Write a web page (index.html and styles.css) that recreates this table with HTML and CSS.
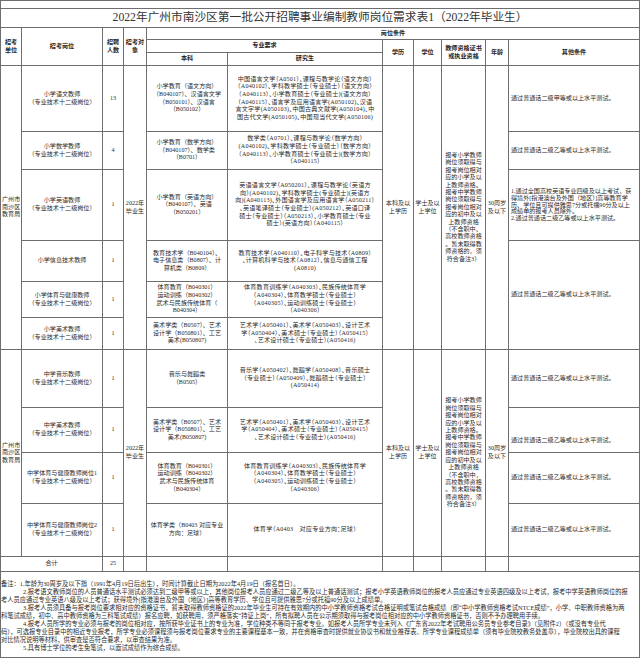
FILE: index.html
```html
<!DOCTYPE html>
<html lang="zh-CN">
<head>
<meta charset="utf-8">
<title>2022年广州市南沙区第一批公开招聘事业编制教师岗位需求表1</title>
<link rel="stylesheet" href="styles.css">
</head>
<body>
<table class="sheet">
<colgroup>
<col class="c-unit"><col class="c-post"><col class="c-num"><col class="c-obj"><col class="c-ug"><col class="c-pg"><col class="c-edu"><col class="c-deg"><col class="c-qual"><col class="c-age"><col class="c-other">
</colgroup>
<tr class="g0"><td colspan="11"></td></tr>
<tr class="g1"><td colspan="11" class="title">2022年广州市南沙区第一批公开招聘事业编制教师岗位需求表1（2022年毕业生）</td></tr>
<tr class="ha">
<th rowspan="3">招考<br>单位</th>
<th rowspan="3">招考岗位</th>
<th rowspan="3">招聘<br>人数</th>
<th rowspan="3">招考对<br>象</th>
<th colspan="7">岗位条件</th>
</tr>
<tr class="hb">
<th colspan="2">专业要求</th>
<th rowspan="2">学历</th>
<th rowspan="2">学位</th>
<th rowspan="2">教师资格证书<br>或执业资格</th>
<th rowspan="2">年龄</th>
<th rowspan="2">其他条件</th>
</tr>
<tr class="hc"><th>本科</th><th>研究生</th></tr>

<tr class="r1">
<td rowspan="6" class="unit-a">广州市<br>南沙区<br>教育局</td>
<td>小学语文教师<br>（专业技术十二级岗位）</td>
<td>13</td>
<td rowspan="6">2022年<br>毕业生</td>
<td>小学教育（语文方向）<br>（B040107）、汉语言文学<br>（B050101）、汉语言<br>（B050102）</td>
<td class="pg">中国语言文学（A0501）、课程与教学论（语文方向）<br>（A040102）、学科教学硕士（专业硕士）（语文方向）<br>（A040113）、小学教育硕士（专业硕士)(语文方向）<br>（A040115）、语言学及应用语言学(A050102)、汉语<br>言文字学(A050103)、中国古典文献学(A050104)、中<br>国古代文学(A050105)、中国现当代文学(A050106)</td>
<td rowspan="6">本科及以<br>上学历</td>
<td rowspan="6">学士及以<br>上学位</td>
<td rowspan="6" class="qual">报考小学教师<br>岗位须取得与<br>报考岗位相对<br>应的小学及以<br>上教师资格。<br>报考中学教师<br>岗位须取得与<br>报考岗位相对<br>应的初中及以<br>上教师资格<br>（不含职中、<br>高校教师资格<br>。暂未取得教<br>师资格的，须<br>符合备注3）</td>
<td rowspan="6">30周岁<br>及以下</td>
<td class="other">通过普通话二级甲等或以上水平测试。</td>
</tr>
<tr class="r2">
<td>小学数学教师<br>（专业技术十二级岗位）</td>
<td>4</td>
<td>小学教育（数学方向）<br>（B040107）、数学类<br>（B0701）</td>
<td class="pg">数学类（A0701）、课程与教学论（数学方向）<br>(A040102)、学科教学硕士（专业硕士）（数学方向）<br>（A040113）、小学教育硕士（专业硕士)(数学方向）<br>（A040115）</td>
<td class="other">通过普通话二级乙等或以上水平测试。</td>
</tr>
<tr class="r3">
<td>小学英语教师<br>（专业技术十二级岗位）</td>
<td>1</td>
<td>小学教育（英语方向）<br>（B040107）、英语<br>（B050201）</td>
<td class="pg">英语语言文学（A050201）、课程与教学论（英语方<br>向）(A040102)、学科教学硕士(专业硕士)(英语方<br>向)(A040113)、外国语言学及应用语言学（A050211）<br>、英语笔译硕士（专业硕士）(A050212）、英语口译<br>硕士（专业硕士）（A050213）、小学教育硕士（专业<br>硕士）(英语方向）（A040115）</td>
<td class="other tight">1.通过全国高校英语专业四级及以上考试，获<br>得境外[指港澳台及外国（地区）]高等教育学<br>历、学位且可提供雅思7分或托福90分及以上<br>成绩单的报考人员除外。<br>2.通过普通话二级乙等或以上水平测试。</td>
</tr>
<tr class="r4">
<td>小学信息技术教师</td>
<td>1</td>
<td>教育技术学（B040104）、<br>电子信息类（B0807）、计<br>算机类（B0809）</td>
<td class="pg">教育技术学（A040110）、电子科学与技术（A0809）<br>、计算机科学与技术（A0812）、信息与通信工程<br>(A0810)</td>
<td rowspan="3" class="other">通过普通话二级乙等或以上水平测试。</td>
</tr>
<tr class="r5">
<td>小学体育与健康教师<br>（专业技术十二级岗位）</td>
<td>1</td>
<td>体育教育（B040301）<br>运动训练（B040302）<br>武术与民族传统体育（<br>B040304）</td>
<td class="pg">体育教育训练学（A040303）、民族传统体育学<br>（A040304）、体育教学硕士（专业硕士）<br>（A040305）、运动训练硕士（专业硕士）<br>（A040306）</td>
</tr>
<tr class="r6">
<td>小学美术教师<br>（专业技术十二级岗位）</td>
<td>1</td>
<td>美术学类（B0507）、艺术<br>设计学（B050801）、工艺<br>美术(B050807)</td>
<td class="pg">艺术学（A050401）、美术学（A050403）、设计艺术<br>学（A050404）、美术硕士（专业硕士）（A050415）<br>、艺术设计硕士（专业硕士）(A050416)</td>
</tr>

<tr class="r7">
<td rowspan="4">广州市<br>南沙区<br>教育局</td>
<td>中学音乐教师<br>（专业技术十二级岗位）</td>
<td>1</td>
<td rowspan="4" class="obj-b">2022年<br>毕业生</td>
<td>音乐与舞蹈类<br>（B0505）</td>
<td class="pg">音乐学（A050402）、舞蹈学（A050408）、音乐硕士<br>（专业硕士）（A050409）、舞蹈硕士（专业硕士）<br>(A050414)</td>
<td rowspan="4">本科及以<br>上学历</td>
<td rowspan="4">学士及以<br>上学位</td>
<td rowspan="4" class="qual">报考小学教师<br>岗位须取得与<br>报考岗位相对<br>应的小学及以<br>上教师资格。<br>报考中学教师<br>岗位须取得与<br>报考岗位相对<br>应的初中及以<br>上教师资格<br>（不含职中，<br>高校教师资格<br>。暂未取得教<br>师资格的，须<br>符合备注3）</td>
<td rowspan="4">30周岁<br>及以下</td>
<td class="other">通过普通话二级乙等或以上水平测试。</td>
</tr>
<tr class="r8">
<td>中学美术教师<br>（专业技术十二级岗位）</td>
<td>1</td>
<td>美术学类（B0507）、艺术<br>设计学（B050801）、工艺<br>美术(B050807)</td>
<td class="pg">艺术学（A050401）、美术学（A050403）、设计艺术<br>学（A050404）、美术硕士（专业硕士）（A050415）<br>、艺术设计硕士（专业硕士）(A050416)</td>
<td class="other other-low">通过普通话二级乙等或以上水平测试。</td>
</tr>
<tr class="r9">
<td>中学体育与健康教师岗位1<br>（专业技术十二级岗位）</td>
<td>1</td>
<td>体育教育（B040301）<br>运动训练（B040302）<br>武术与民族传统体育<br>（B040304）</td>
<td class="pg">体育教育训练学（A040303）、民族传统体育学<br>（A040304）、体育教学硕士（专业硕士）<br>（A040305）、运动训练硕士（专业硕士）<br>（A040306）</td>
<td class="other">通过普通话二级乙等或以上水平测试。</td>
</tr>
<tr class="r10">
<td>中学体育与健康教师岗位2<br>（专业技术十二级岗位）</td>
<td>1</td>
<td>体育学类（B0403 对应专业<br>方向：足球）</td>
<td class="pg">体育学（A0403　对应专业方向：足球）</td>
<td class="other">通过普通话二级乙等或以上水平测试。</td>
</tr>
<tr class="rt">
<td colspan="2">合计</td>
<td>25</td>
<td></td><td></td><td></td><td></td><td></td><td></td><td></td><td></td>
</tr>
<tr class="rn">
<td colspan="11" class="notes">
<div>备注：1.年龄为30周岁及以下指（1991年4月19日后出生），时间计算截止日期为2022年4月19日（报名首日）。</div>
<div class="ind">2.报考语文教师岗位的人员普通话水平测试必须达到二级甲等或以上，其他岗位报考人员应通过二级乙等及以上普通话测试；报考小学英语教师岗位的报考人员应通过专业英语四级及以上考试，报考中学英语教师岗位的报</div>
<div>考人员应通过专业英语八级及以上考试；获得境外[指港澳台及外国（地区）]高等教育学历、学位且可提供雅思7分或托福90分及以上成绩单。</div>
<div class="ind">3.报考人员须具备与报考岗位要求相对应的资格证书，暂未取得教师资格证的2022年毕业生可持在有效期内的中小学教师资格考试合格证明或笔试合格成绩（即“中小学教师资格考试NTCE成绩”，小学、中职教师资格为两</div>
<div>科笔试成绩，初中、高中教师资格为三科笔试成绩）报名应聘，如获聘用，须严格落实“持证上岗”，所有拟聘人员在公示期须取得与报考岗位相对应的中小学教师资格证书，否则不予办理聘用手续。</div>
<div class="ind">4.报考人员所学的专业必须与报考的岗位相对应，按所获毕业证书上的专业为准，学位种类不等同于报考专业。如报考人员所学专业未列入《广东省2022年考试聘用公务员专业参考目录》（见附件2）（或没有专业代</div>
<div>码），可选报专业目录中的相近专业报考，所学专业必须课程须与报考岗位要求专业的主要课程基本一致，并在资格审查时提供就业协议书和就业推荐表、所学专业课程成绩单（须有毕业院校教务处盖章），毕业院校出具的课程</div>
<div>对比情况说明等材料，供审查是否符合要求，以审查结果为准。</div>
<div class="ind">5.具有博士学位的考生免笔试，以面试成绩作为综合成绩。</div>
</td>
</tr>
</table>
</body>
</html>
```

FILE: styles.css
```css
html, body {
  margin: 0;
  padding: 0;
  background: #ffffff;
}

.sheet {
  border-collapse: collapse;
  table-layout: fixed;
  width: 639px;
  font-family: "Liberation Serif", "Noto Sans CJK SC", serif;
  font-size: 6.1px;
  line-height: 7.6px;
  color: #2a2a2a;
}

.c-unit { width: 21px; }
.c-post { width: 81px; }
.c-num { width: 21px; }
.c-obj { width: 23px; }
.c-ug { width: 81px; }
.c-pg { width: 155px; }
.c-edu { width: 31px; }
.c-deg { width: 28px; }
.c-qual { width: 44px; }
.c-age { width: 23px; }
.c-other { width: 131px; }

.sheet td,
.sheet th {
  border: 1px solid #6e6e6e;
  padding: 0 1px;
  text-align: center;
  vertical-align: middle;
  white-space: nowrap;
  overflow: hidden;
}

.sheet th {
  font-weight: bold;
  color: #1e1e1e;
}

.g0 { height: 8px; }
.g1 { height: 19px; }
.ha { height: 12px; }
.hb { height: 13px; }
.hc { height: 13px; }
.r1 { height: 66px; }
.r2 { height: 38px; }
.r3 { height: 71px; }
.r4 { height: 41px; }
.r5 { height: 36px; }
.r6 { height: 32px; }
.r7 { height: 58px; }
.r8 { height: 45px; }
.r9 { height: 51px; }
.r10 { height: 53px; }
.rt { height: 15px; }
.rn { height: 86px; }

.title {
  font-family: "Liberation Serif", "Noto Sans CJK SC", serif;
  font-size: 11.7px;
  line-height: 14px;
  color: #333333;
}

.unit-a {
  padding-top: 40px;
}

.obj-b {
  padding-top: 6px;
}

.pg {
  font-feature-settings: "halt";
  letter-spacing: 0.2px;
}

.qual {
  line-height: 7.4px;
}

.sheet td.other {
  text-align: left;
  padding-left: 2px;
}

.sheet td.tight {
  line-height: 6.8px;
}

.sheet td.other-low {
  padding-top: 22px;
}

.sheet td.notes {
  text-align: left;
  vertical-align: top;
  padding: 8px 0 0 0;
  font-family: "Liberation Serif", "Noto Sans CJK SC", serif;
  font-size: 6.25px;
  line-height: 8px;
  color: #2a2a2a;
}

.notes div {
  white-space: nowrap;
}

.notes .ind {
  padding-left: 22px;
}
```
